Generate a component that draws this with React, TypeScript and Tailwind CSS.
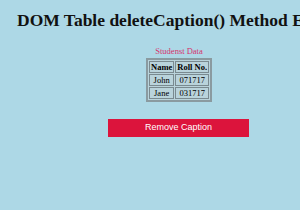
export default function App() {
  return (
    <div className="w-[300px] h-[210px] overflow-hidden bg-[#add8e6] font-['Liberation_Serif',serif] text-black">
      <h1 className="pl-[17px] pt-[11px] text-[17.5px] leading-[18px] font-bold whitespace-nowrap text-[#111]">
        DOM Table deleteCaption() Method Example
      </h1>
      <div className="flex justify-center pt-[18px] pl-[58px]">
        <table className="border-2 border-[#8a9aa0] border-separate border-spacing-[1px] bg-[#b9d3db] text-[8.5px] leading-[8px]">
          <caption className="text-[#d6336c] text-[8.5px] leading-[9px] pb-[2px]">Studenst Data</caption>
          <thead>
            <tr>
              <th className="border border-[#7a8a90] px-[1px] py-[1px] font-bold">Name</th>
              <th className="border border-[#7a8a90] px-[1px] py-[1px] font-bold">Roll No.</th>
            </tr>
          </thead>
          <tbody>
            <tr>
              <td className="border border-[#7a8a90] px-[1px] py-[1px] text-center">John</td>
              <td className="border border-[#7a8a90] px-[1px] py-[1px] text-center">071717</td>
            </tr>
            <tr>
              <td className="border border-[#7a8a90] px-[1px] py-[1px] text-center">Jane</td>
              <td className="border border-[#7a8a90] px-[1px] py-[1px] text-center">031717</td>
            </tr>
          </tbody>
        </table>
      </div>
      <div className="flex pl-[108px] pt-[17px]">
        <button className="w-[141px] h-[18px] bg-[#dc143c] text-white text-[9px] font-['Liberation_Sans',sans-serif]">
          Remove Caption
        </button>
      </div>
    </div>
  );
}
